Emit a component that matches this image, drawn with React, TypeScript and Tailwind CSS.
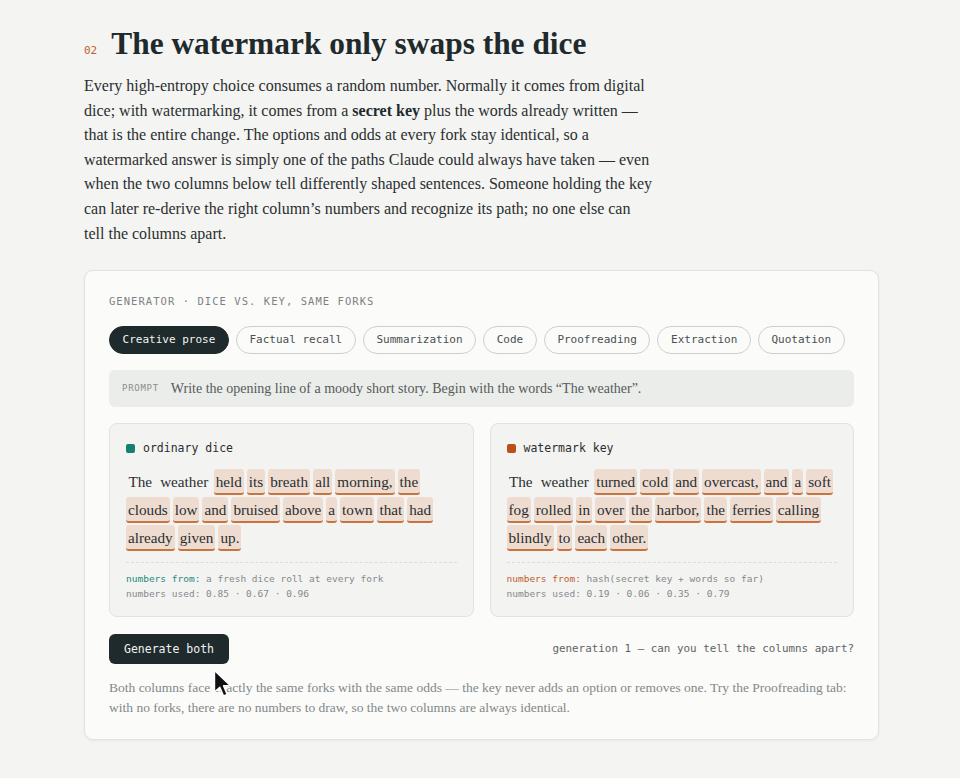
import React from "react";

const serif = { fontFamily: '"Liberation Serif", "Times New Roman", serif' };
const mono = { fontFamily: '"DejaVu Sans Mono", "Liberation Mono", monospace' };

const tabs = ["Creative prose", "Factual recall", "Summarization", "Code", "Proofreading", "Extraction", "Quotation"];

function Words({ plain, chips }: { plain: string[]; chips: string[] }) {
  return (
    <div className="flex flex-wrap gap-x-[3px] gap-y-[2px] text-[15.2px] text-[#2a2f30]" style={serif}>
      {plain.map((w, i) => (
        <span key={"p" + i} className="inline-block px-[2.5px] h-[26px] leading-[26px]">
          {w}
        </span>
      ))}
      {chips.map((w, i) => (
        <span
          key={"c" + i}
          className="inline-block px-[2px] h-[26px] leading-[25px] bg-[#efdcd0] border-b-2 border-[#c9733f] rounded-[3px]"
        >
          {w}
        </span>
      ))}
    </div>
  );
}

function Column({
  color,
  label,
  chips,
  fromText,
  used,
}: {
  color: string;
  label: string;
  chips: string[];
  fromText: string;
  used: string;
}) {
  const isTeal = color === "teal";
  return (
    <div className="flex-1 rounded-[8px] border border-[#e2e2df] bg-[#f3f3f2] px-4 pt-4 pb-[15px]">
      <div className="flex items-center gap-[8px] h-[16px]">
        <span className={isTeal ? "w-[9px] h-[9px] rounded-[2px] bg-[#167f71]" : "w-[9px] h-[9px] rounded-[2px] bg-[#b9501b]"} />
        <span className="text-[11.5px] text-[#2a2f30]" style={mono}>
          {label}
        </span>
      </div>
      <div className="mt-[13px]">
        <Words plain={["The", "weather"]} chips={chips} />
      </div>
      <div className="mt-[11px] border-t border-dashed border-[#dcdcd8]" />
      <div className="mt-[8px] text-[9.5px] leading-[15px] text-[#858a8a]" style={mono}>
        <div>
          <span className={isTeal ? "text-[#1e8a7b]" : "text-[#c0602c]"}>numbers from:</span> {fromText}
        </div>
        <div>numbers used: {used}</div>
      </div>
    </div>
  );
}

export default function App() {
  return (
    <div className="min-h-[778px] w-full bg-[#f4f4f2] text-[#1f2a2c]">
      <div className="pl-[84px] pr-[81px] pt-[26px] pb-[38px]">
        <div className="flex items-baseline gap-[14px]">
          <span className="text-[11px] text-[#c0602c]" style={mono}>
            02
          </span>
          <h1 className="text-[31.4px] leading-[36px] font-bold text-[#1f2a2c]" style={serif}>
            The watermark only swaps the dice
          </h1>
        </div>
        <p className="mt-[12px] max-w-[569px] text-[16px] leading-[24.6px] text-[#2a2f30]" style={serif}>
          Every high-entropy choice consumes a random number. Normally it comes from digital dice; with
          watermarking, it comes from a <b className="font-bold text-[#1f2a2c]">secret key</b> plus the words already
          written — that is the entire change. The options and odds at every fork stay identical, so a watermarked
          answer is simply one of the paths Claude could always have taken — even when the two columns below tell
          differently shaped sentences. Someone holding the key can later re-derive the right column’s numbers and
          recognize its path; no one else can tell the columns apart.
        </p>

        <div className="mt-[24px] rounded-[9px] border border-[#e2e2df] bg-[#fbfbfa] shadow-[0_1px_3px_rgba(0,0,0,0.05)] px-6 pt-[23px] pb-[22px]">
          <div className="text-[10.5px] leading-[14px] tracking-[0.1em] text-[#7d8282]" style={mono}>
            GENERATOR · DICE VS. KEY, SAME FORKS
          </div>
          <div className="mt-[18px] flex gap-[7px]">
            {tabs.map((t, i) => (
              <button
                key={t}
                className={
                  i === 0
                    ? "h-[28px] px-[12.6px] rounded-full border border-[#1f2a2c] bg-[#1f2a2c] text-[#f4f4f2] text-[11px]"
                    : "h-[28px] px-[12.6px] rounded-full border border-[#cfd0cd] bg-transparent text-[#4a4f50] text-[11px]"
                }
                style={mono}
              >
                {t}
              </button>
            ))}
          </div>
          <div className="mt-[16px] flex items-center gap-[12px] h-[37px] rounded-[6px] bg-[#ebedea] px-[13px]">
            <span className="text-[9px] tracking-[0.08em] text-[#8a8e8e]" style={mono}>
              PROMPT
            </span>
            <span className="text-[14px] text-[#555a5b]" style={serif}>
              Write the opening line of a moody short story. Begin with the words “The weather”.
            </span>
          </div>
          <div className="mt-[16px] flex gap-[16px]">
            <Column
              color="teal"
              label="ordinary dice"
              chips={["held", "its", "breath", "all", "morning,", "the", "clouds", "low", "and", "bruised", "above", "a", "town", "that", "had", "already", "given", "up."]}
              fromText="a fresh dice roll at every fork"
              used="0.85 · 0.67 · 0.96"
            />
            <Column
              color="orange"
              label="watermark key"
              chips={["turned", "cold", "and", "overcast,", "and", "a", "soft", "fog", "rolled", "in", "over", "the", "harbor,", "the", "ferries", "calling", "blindly", "to", "each", "other."]}
              fromText="hash(secret key + words so far)"
              used="0.19 · 0.06 · 0.35 · 0.79"
            />
          </div>
          <div className="relative mt-[17px] flex items-center justify-between">
            <button className="h-[30px] px-[15px] rounded-[6px] bg-[#1f2a2c] text-[11.5px] text-[#f1f2f0]" style={mono}>
              Generate both
            </button>
            <span className="text-[10.9px] text-[#5f6465]" style={mono}>
              generation 1 — can you tell the columns apart?
            </span>
            <svg className="absolute left-[104px] top-[35px] z-10" width="20" height="30" viewBox="0 0 20 30">
              <path
                d="M1.5 1.5 L1.5 23 L6.8 18.2 L10.6 27 L14.2 25.4 L10.5 16.8 L17.5 16.8 Z"
                fill="#111"
                stroke="#fff"
                strokeWidth="1.4"
                strokeLinejoin="round"
              />
            </svg>
          </div>
          <p className="mt-[14px] text-[13.5px] leading-[19.5px] text-[#838888]" style={serif}>
            Both columns face exactly the same forks with the same odds — the key never adds an option or removes one.
            Try the Proofreading tab: with no forks, there are no numbers to draw, so the two columns are always
            identical.
          </p>
        </div>
      </div>
    </div>
  );
}
